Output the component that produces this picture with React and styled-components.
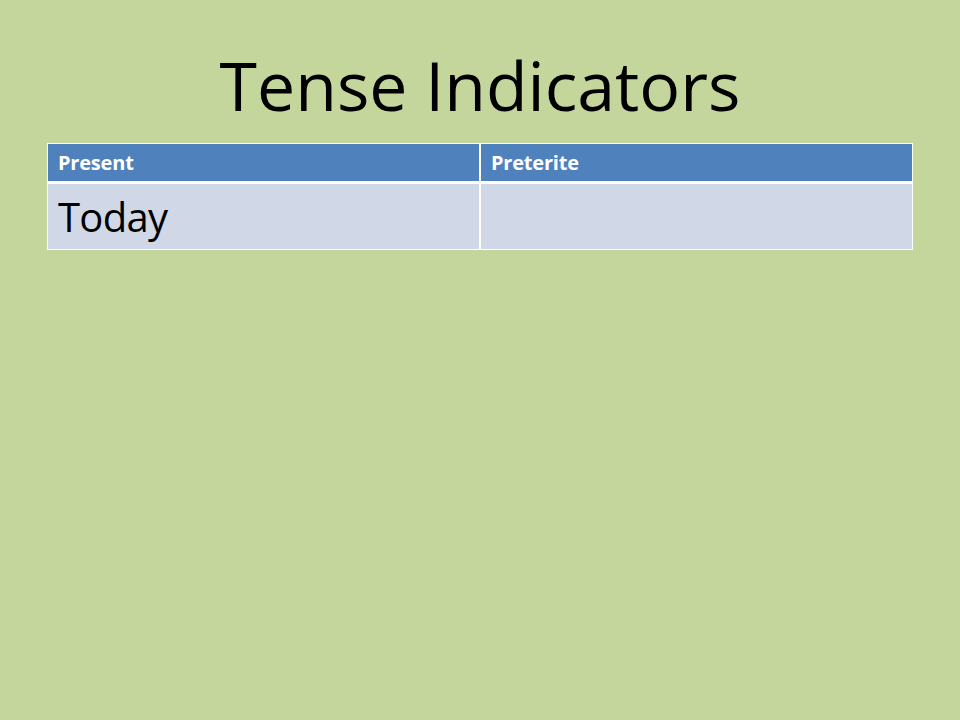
import React from "react";
import styled, { createGlobalStyle } from "styled-components";

const GlobalStyle = createGlobalStyle`
	html, body {
		margin: 0;
		padding: 0;
		background: #C4D69C;
	}
`;

const App = () => {
	return (
		<Slide>
			<GlobalStyle />
			<Title>Tense Indicators</Title>

			{/* 표 */}
			<Table>
				<HeadCell>Present</HeadCell>
				<HeadCell>Preterite</HeadCell>
				<BodyCell>Today</BodyCell>
				<BodyCell />
			</Table>
		</Slide>
	);
};

export default App;

const Slide = styled.div`
	width: 960px;
	height: 720px;
	background: #C4D69C;
	display: flex;
	flex-direction: column;
	align-items: center;
	font-family: "Open Sans", "Liberation Sans", sans-serif;
	overflow: hidden;
`;

const Title = styled.h1`
	margin: 0;
	padding-top: 51px;
	height: 106px;
	box-sizing: border-box;
	font-size: 68px;
	font-weight: 400;
	line-height: 68px;
	letter-spacing: 0px;
	color: #000000;
`;

const Table = styled.div`
	width: 866px;
	margin-top: 37px;
	box-sizing: border-box;
	background: #FFFFFF;
	padding: 1px;
	display: grid;
	grid-template-columns: 1fr 1fr;
	gap: 3px 2px;
`;

const HeadCell = styled.div`
	height: 37px;
	background: #4F81BD;
	color: #FFFFFF;
	font-weight: 700;
	font-size: 20px;
	padding: 0 10px;
	display: flex;
	align-items: center;
	letter-spacing: -0.2px;
`;

const BodyCell = styled.div`
	height: 65px;
	background: #D0D8E8;
	color: #000000;
	font-size: 40px;
	padding: 0 10px;
	display: flex;
	align-items: center;
	letter-spacing: -0.7px;
`;
